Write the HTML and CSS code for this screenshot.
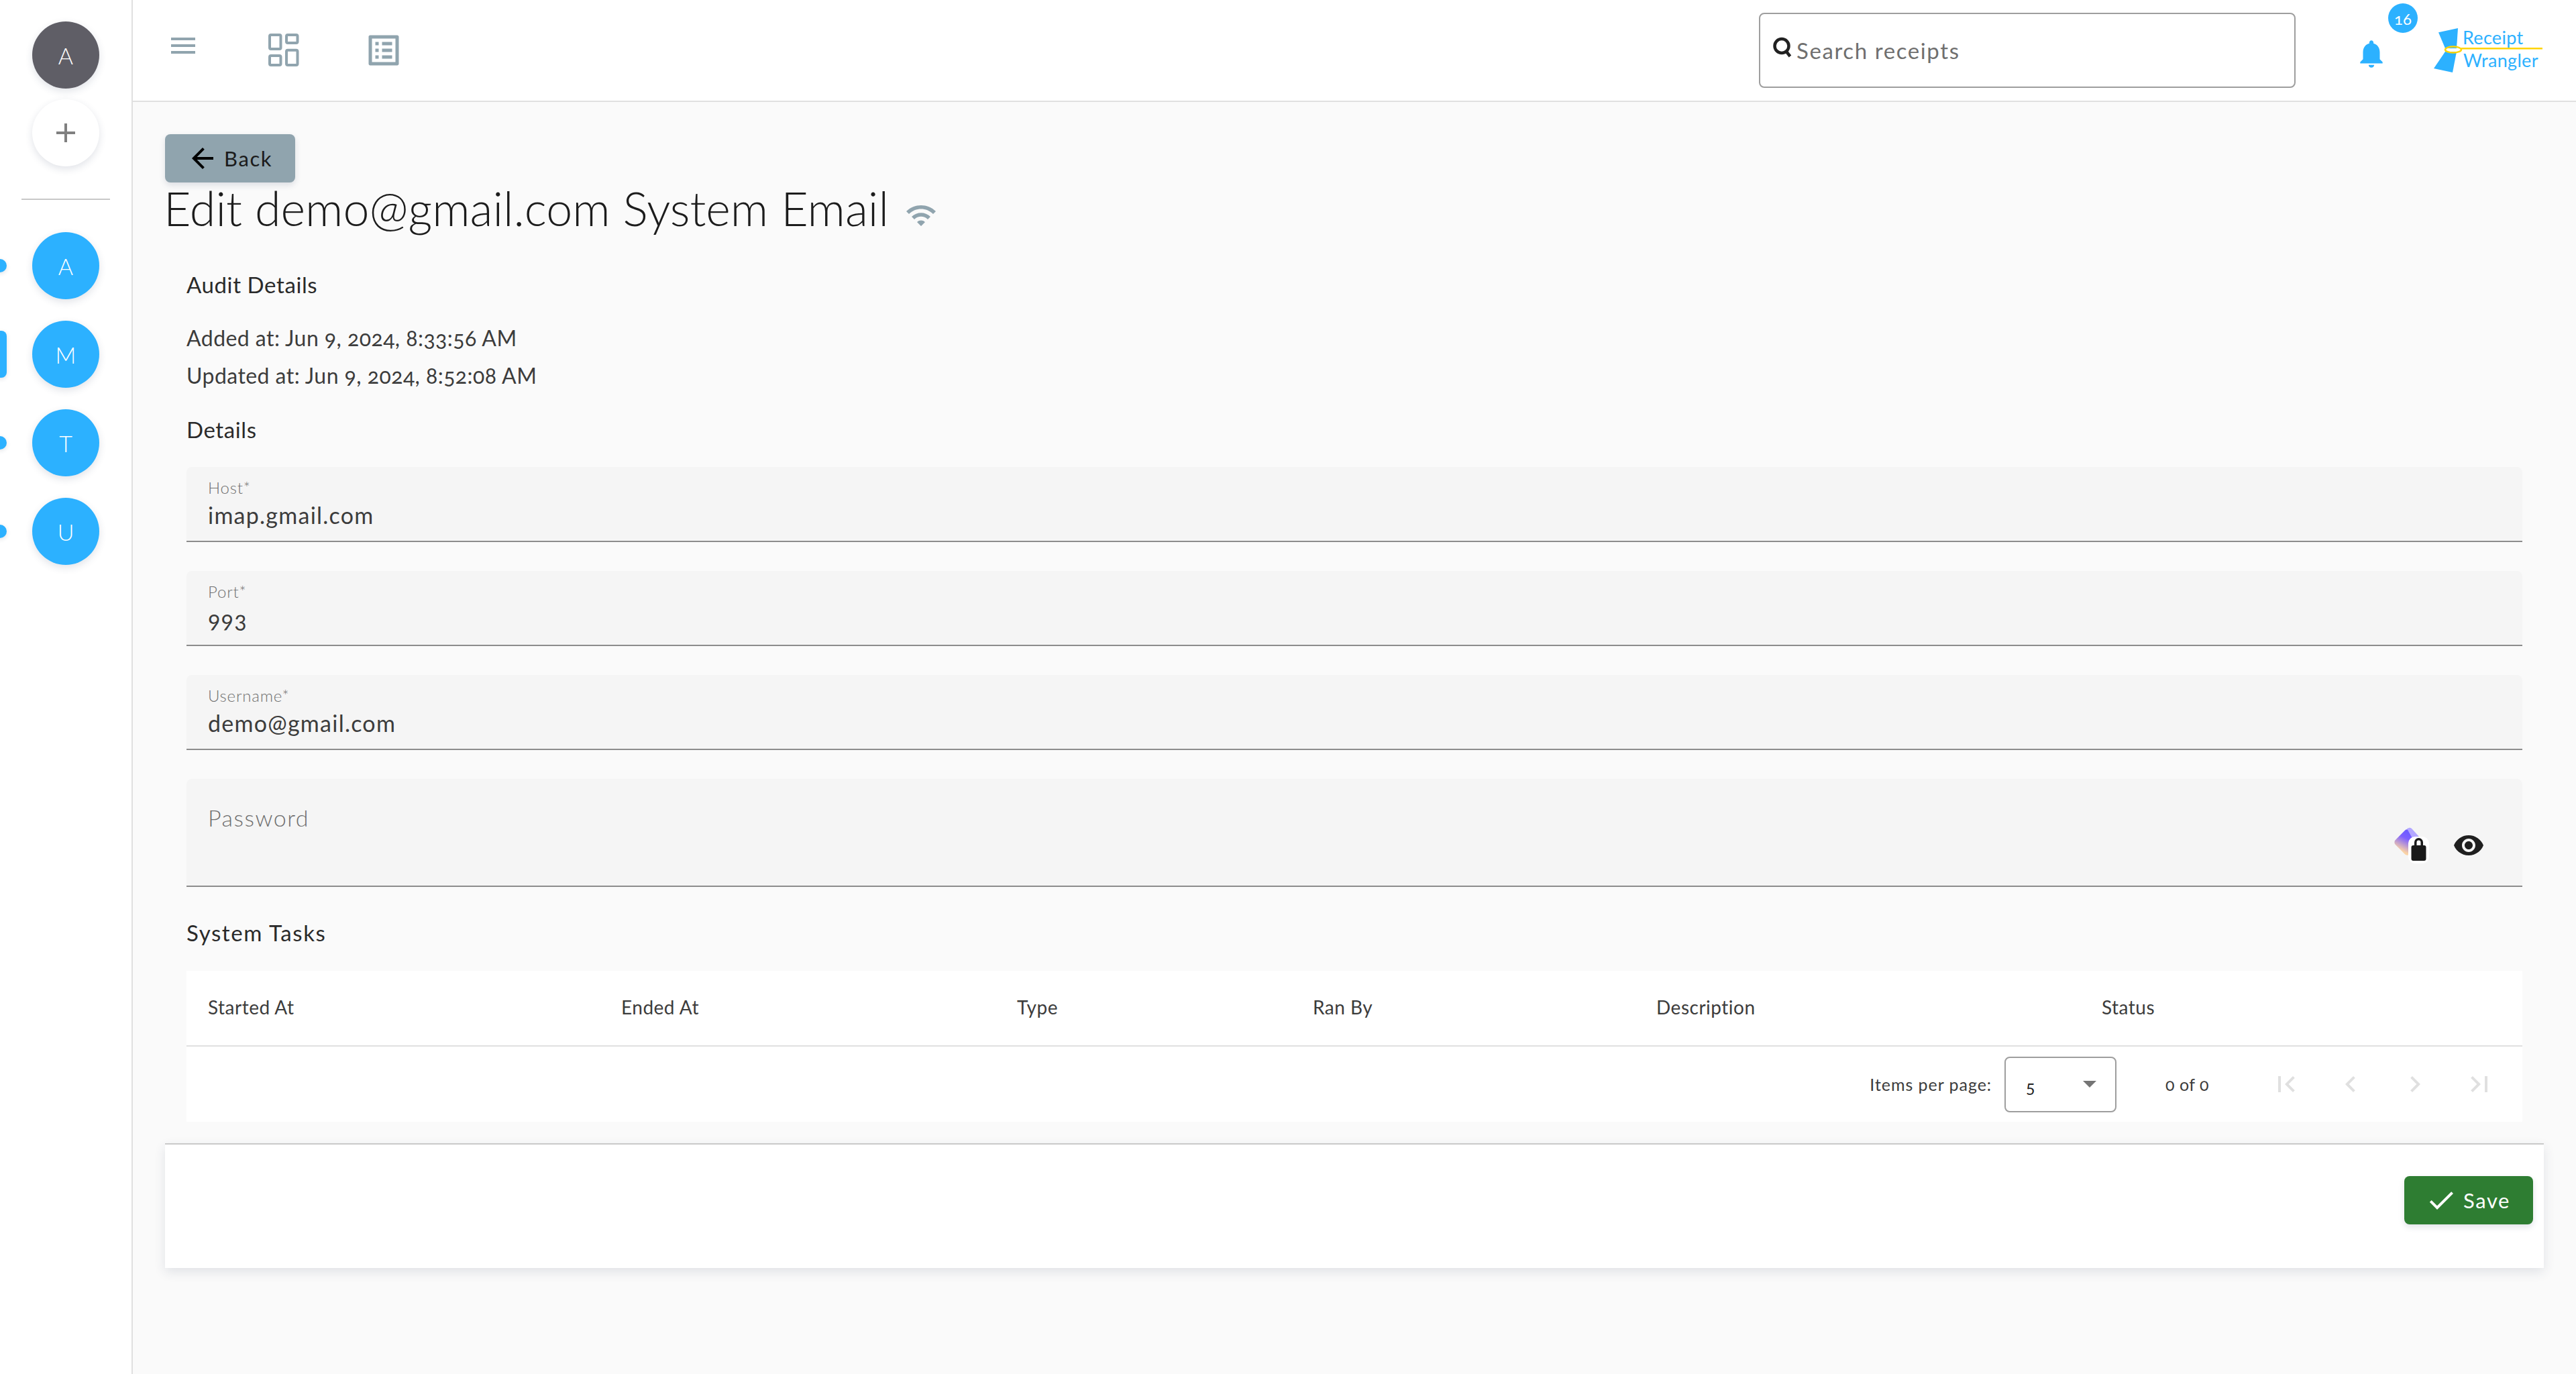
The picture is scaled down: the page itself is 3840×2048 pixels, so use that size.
FILE: index.html
```html
<!DOCTYPE html>
<html lang="en">
<head>
<meta charset="utf-8">
<title>Edit System Email</title>
<link rel="stylesheet" href="styles.css">
</head>
<body>
<div class="app">
  <aside class="rail">
    <div class="avatar avatar-dark">A</div>
    <div class="avatar avatar-white">
      <svg class="plus-icon" viewBox="0 0 24 24"><path d="M19 13h-6v6h-2v-6H5v-2h6V5h2v6h6v2z"/></svg>
    </div>
    <div class="rail-divider"></div>
    <div class="group-list">
      <div class="group-row"><span class="pill"></span><div class="avatar avatar-blue">A</div></div>
      <div class="group-row"><span class="pill pill-active"></span><div class="avatar avatar-blue">M</div></div>
      <div class="group-row"><span class="pill"></span><div class="avatar avatar-blue">T</div></div>
      <div class="group-row"><span class="pill"></span><div class="avatar avatar-blue">U</div></div>
    </div>
  </aside>
  <div class="main">
    <header class="topbar">
      <svg class="icon48 nav-menu" viewBox="0 0 24 24"><path d="M3 18h18v-2H3v2zm0-5h18v-2H3v2zm0-7v2h18V6H3z"/></svg>
      <svg class="icon60 nav-dash" viewBox="0 0 60 60">
        <rect class="tile" x="9" y="7" width="16.500" height="21" rx="2"/>
        <rect class="tile" x="34" y="7" width="16.500" height="12" rx="2"/>
        <rect class="tile" x="9" y="38" width="16.500" height="14" rx="2"/>
        <rect class="tile" x="34" y="29.700" width="16.500" height="22.300" rx="2"/>
      </svg>
      <svg class="icon60 nav-list" viewBox="0 0 24 24"><path d="M19 5v14H5V5h14m1.1-2H3.9c-.5 0-.9.4-.9.9v16.2c0 .4.4.9.9.9h16.2c.4 0 .9-.5.9-.9V3.9c0-.5-.5-.9-.9-.9zM11 7h6v2h-6V7zm0 4h6v2h-6v-2zm0 4h6v2h-6zM7 7h2v2H7zm0 4h2v2H7zm0 4h2v2H7z"/></svg>
      <div class="search">
        <svg class="search-icon" viewBox="0 0 36 36"><circle class="search-ring" cx="16" cy="15.500" r="10.500"/><line class="search-ring" x1="23" y1="24" x2="28.500" y2="31"/></svg>
        <span class="search-text">Search receipts</span>
      </div>
      <div class="bell">
        <svg class="bell-icon" viewBox="0 0 24 24"><path d="M12 22c1.1 0 2-.9 2-2h-4c0 1.1.89 2 2 2zm6-6v-5c0-3.07-1.64-5.64-4.5-6.32V4c0-.83-.67-1.5-1.5-1.5s-1.5.67-1.5 1.5v.68C7.63 5.36 6 7.92 6 11v5l-2 2v1h16v-1l-2-2z"/></svg>
        <span class="badge">16</span>
      </div>
      <svg class="logo" viewBox="0 0 170 72">
        <polygon class="logo-fill" points="25,7.300 54,1 52,31 35,31"/>
        <polygon class="logo-fill" points="35,36 52,36 46,67 18,61"/>
        <ellipse class="logo-ring" cx="47" cy="33" rx="12" ry="4.500"/>
        <line class="logo-line" x1="59" y1="31.300" x2="180" y2="31.300"/>
        <text class="logo-text" x="61" y="25">Receipt</text>
        <text class="logo-text" x="62" y="59">Wrangler</text>
      </svg>
    </header>
    <main class="content">
      <a class="btn btn-back">
        <svg class="icon48" viewBox="0 0 24 24"><path d="M20 11H7.83l5.59-5.59L12 4l-8 8 8 8 1.41-1.41L7.83 13H20v-2z"/></svg>
        <span>Back</span>
      </a>
      <h1 class="title"><span class="title-text">Edit demo@gmail.com System Email</span>
        <svg class="wifi" viewBox="0 0 24 24"><path d="M1 9l2 2c4.97-4.97 13.03-4.97 18 0l2-2C16.93 2.93 7.08 2.93 1 9zm8 8l3 3 3-3c-1.65-1.66-4.34-1.66-6 0zm-4-4l2 2c2.76-2.76 7.24-2.76 10 0l2-2C15.14 9.14 8.87 9.14 5 13z"/></svg>
      </h1>
      <section class="form">
        <h2 class="section-title section-audit">Audit Details</h2>
        <p class="audit-line audit-first">Added at: Jun 9, 2024, 8:33:56 AM</p>
        <p class="audit-line">Updated at: Jun 9, 2024, 8:52:08 AM</p>
        <h2 class="section-title section-details">Details</h2>
        <div class="field">
          <label class="field-label">Host*</label>
          <div class="field-value">imap.gmail.com</div>
        </div>
        <div class="field">
          <label class="field-label">Port*</label>
          <div class="field-value">993</div>
        </div>
        <div class="field">
          <label class="field-label">Username*</label>
          <div class="field-value">demo@gmail.com</div>
        </div>
        <div class="field field-password">
          <span class="password-label">Password</span>
          <div class="password-icons">
            <svg class="key-icon" viewBox="0 0 56 56">
              <defs>
                <linearGradient id="keyGrad" x1="0.3" y1="0.1" x2="0.6" y2="1">
                  <stop offset="0" stop-color="#6f5cff"/>
                  <stop offset="0.3" stop-color="#7d5fff"/>
                  <stop offset="1" stop-color="#fbd3a5"/>
                </linearGradient>
              </defs>
              <rect x="8.5" y="8.5" width="30" height="30" rx="5" transform="rotate(45 23.5 23.5)" fill="url(#keyGrad)"/>
              <path d="M23 3l3-1c2-.5 3 0 5 2l10 11-8 6z" fill="#b3a7ff"/>
              <rect x="25" y="15" width="31" height="40" rx="10" fill="#fff"/>
              <path d="M34 28v-4.500a6.500 6.500 0 0 1 13 0V28h1.500a3 3 0 0 1 3 3v17a3 3 0 0 1-3 3H32.500a3 3 0 0 1-3-3V31a3 3 0 0 1 3-3zM37.500 28h6v-4.500a3 3 0 0 0-6 0z" fill="#1a1a1a" fill-rule="evenodd"/>
            </svg>
            <svg class="icon48 eye-icon" viewBox="0 0 24 24"><path d="M12 4.500C7 4.500 2.730 7.610 1 12c1.730 4.390 6 7.500 11 7.500s9.270-3.110 11-7.500c-1.730-4.390-6-7.500-11-7.500zM12 17c-2.760 0-5-2.240-5-5s2.240-5 5-5 5 2.240 5 5-2.240 5-5 5zm0-8c-1.660 0-3 1.340-3 3s1.340 3 3 3 3-1.340 3-3-1.340-3-3-3z"/></svg>
          </div>
        </div>
        <h2 class="section-title section-tasks">System Tasks</h2>
        <div class="table">
          <div class="table-head">
            <span>Started At</span><span>Ended At</span><span>Type</span><span>Ran By</span><span>Description</span><span>Status</span>
          </div>
          <div class="pager">
            <span class="pager-label">Items per page:</span>
            <div class="select"><span>5</span><i class="select-arrow"></i></div>
            <span class="pager-range">0 of 0</span>
            <button class="pager-btn"><svg class="icon48" viewBox="0 0 24 24"><path d="M18.41 16.59L13.82 12l4.59-4.59L17 6l-6 6 6 6zM6 6h2v12H6z"/></svg></button>
            <button class="pager-btn"><svg class="icon48" viewBox="0 0 24 24"><path d="M15.41 7.41L14 6l-6 6 6 6 1.41-1.41L10.83 12z"/></svg></button>
            <button class="pager-btn"><svg class="icon48" viewBox="0 0 24 24"><path d="M10 6L8.590 7.41 13.17 12l-4.580 4.590L10 18l6-6z"/></svg></button>
            <button class="pager-btn"><svg class="icon48" viewBox="0 0 24 24"><path d="M5.590 7.410L10.180 12l-4.590 4.590L7 18l6-6-6-6zM16 6h2v12h-2z"/></svg></button>
          </div>
        </div>
      </section>
      <footer class="actions">
        <a class="btn btn-save">
          <svg class="icon48" viewBox="0 0 24 24"><path d="M9 16.170L4.830 12l-1.410 1.410L9 19 21 7l-1.410-1.410z"/></svg>
          <span>Save</span>
        </a>
      </footer>
    </main>
  </div>
</div>
</body>
</html>
```
FILE: styles.css
```css
* { box-sizing: border-box; }
html, body { margin: 0; height: 100%; }
body {
  background: #fafafa;
  color: #212121;
  font-family: "Lato", "Open Sans", sans-serif;
  font-variant-numeric: oldstyle-nums;
  font-size: 32px;
}
.app { display: flex; height: 2048px; overflow: hidden; }

/* left rail */
.rail {
  width: 198px;
  flex: none;
  background: #fff;
  border-right: 2px solid #e0e0e0;
  display: flex;
  flex-direction: column;
  align-items: center;
  padding-top: 32px;
}
.avatar {
  width: 100px;
  height: 100px;
  border-radius: 50%;
  display: flex;
  align-items: center;
  justify-content: center;
  font-size: 34px;
  font-weight: 300;
  color: #fff;
  box-shadow: 0 4px 12px rgba(40, 60, 90, .14);
}
.avatar-dark { background: #5f5e66; margin-bottom: 16px; }
.avatar-white { background: #fff; }
.avatar-blue { background: #2cb1ff; }
.plus-icon { width: 48px; height: 48px; fill: #808080; }
.rail-divider { width: 132px; height: 2px; background: #c8c8c8; margin-top: 48px; margin-bottom: 48px; flex: none; }
.group-list { display: flex; flex-direction: column; gap: 32px; width: 100%; align-items: center; }
.group-row { position: relative; width: 100%; display: flex; justify-content: center; }
.pill {
  position: absolute;
  left: -10px;
  top: 40px;
  width: 20px;
  height: 20px;
  border-radius: 10px;
  background: #2cb1ff;
  box-shadow: 0 2px 6px rgba(40, 60, 90, .15);
}
.pill-active { top: 15px; height: 70px; border-radius: 8px; }

/* top bar */
.main { flex: 1; min-width: 0; display: flex; flex-direction: column; }
.topbar {
  height: 152px;
  flex: none;
  background: #fff;
  border-bottom: 2px solid #e0e0e0;
  display: flex;
  align-items: center;
  position: relative;
}
.icon48 { width: 48px; height: 48px; flex: none; }
.icon60 { width: 60px; height: 60px; flex: none; fill: #90a4ae; }
.tile { fill: none; stroke: #90a4ae; stroke-width: 4; }
.nav-menu { fill: #90a4ae; margin-left: 51px; margin-bottom: 14px; }
.nav-dash { margin-left: 96px; }
.nav-list { margin-left: 89px; }
.search {
  margin-left: 2020px;
  width: 800px;
  height: 112px;
  border: 2px solid #9e9e9e;
  border-radius: 8px;
  display: flex;
  align-items: center;
  padding-left: 16px;
}
.search-icon { width: 36px; height: 36px; margin-bottom: 8px; flex: none; }
.search-ring { fill: none; stroke: #212121; stroke-width: 4.500; }
.search-text { color: #6f6f6f; font-size: 33px; letter-spacing: 1.6px; margin-left: 2px; }
.bell { position: relative; margin-left: 88px; width: 50px; height: 50px; margin-top: 10px; }
.bell-icon { width: 50px; height: 50px; fill: #2cb1ff; display: block; }
.badge {
  position: absolute;
  left: 50px;
  top: -50px;
  width: 44px;
  height: 44px;
  border-radius: 50%;
  background: #2cb1ff;
  color: #fff;
  font-size: 24px;
  display: flex;
  align-items: center;
  justify-content: center;
}
.logo { width: 170px; height: 72px; margin-left: 50px; margin-top: 4px; overflow: visible; flex: none; }
.logo-fill { fill: #2cb1ff; }
.logo-ring { fill: none; stroke: #ffd400; stroke-width: 2.500; }
.logo-line { stroke: #ffd400; stroke-width: 2.500; }
.logo-text { fill: #2cb1ff; font-family: "Lato", sans-serif; font-size: 27px; font-weight: 400; letter-spacing: .3px; }

/* content */
.content { flex: 1; padding: 48px 48px 0; display: flex; flex-direction: column; align-items: stretch; }
.btn {
  height: 72px;
  border-radius: 8px;
  display: flex;
  align-items: center;
  font-size: 31px;
  letter-spacing: 1.6px;
  box-shadow: 0 4px 10px rgba(40, 60, 90, .14);
}
.btn-back { width: 194px; background: #90a4ae; color: #1b1b1b; padding-left: 32px; align-self: flex-start; gap: 8px; }
.btn-back .icon48 { fill: #000; }
.title {
  margin: 0 0 0 -2px;
  height: 82px;
  font-size: 70px;
  font-weight: 300;
  display: flex;
  align-items: center;
  white-space: nowrap;
}
.title-text { margin-top: -6px; letter-spacing: 0; color: #1c1c1c; }
.wifi { width: 48px; height: 48px; fill: #90a4ae; margin-left: 24px; margin-top: 16px; }
.form { padding: 0 32px; }
.section-title { margin: 0; font-size: 33px; font-weight: 400; line-height: 40px; color: #2a2a2a; letter-spacing: .6px; }
.section-audit { margin-top: 50px; }
.audit-line { margin: 0; line-height: 56px; height: 56px; font-weight: 400; font-size: 32px; letter-spacing: .45px; color: #3c3c3c; }
.audit-first { margin-top: 32px; }
.section-details { margin-top: 32px; }
.field {
  background: #f5f5f5;
  height: 112px;
  margin-top: 36px;
  border-bottom: 2px solid #8c8c8c;
  border-radius: 8px 8px 0 0;
  padding: 16px 32px 0;
}
.field + .field { margin-top: 43px; }
.field-label { display: block; font-size: 24px; line-height: 30px; color: #707070; font-weight: 300; letter-spacing: .8px; }
.field-value { font-size: 34px; line-height: 44px; margin-top: 4px; letter-spacing: 1.25px; font-weight: 400; color: #3c3c3c; }
.field-password { height: 161px; position: relative; padding-top: 38px; }
.password-label { color: #6f6f6f; font-size: 34px; line-height: 40px; font-weight: 300; letter-spacing: 1.5px; }
.password-icons {
  position: absolute;
  right: 56px;
  top: 71px;
  display: flex;
  align-items: center;
  gap: 35px;
}
.key-icon { width: 56px; height: 56px; }
.eye-icon { fill: #1f1f1f; }
.section-tasks { margin-top: 48px; letter-spacing: 1.6px; }
.table { background: #fff; margin-top: 37px; }
.table-head {
  height: 113px;
  border-bottom: 2px solid #e0e0e0;
  display: grid;
  grid-template-columns: 616px 590px 441px 512px 664px 1fr;
  align-items: center;
  padding-left: 32px;
  padding-bottom: 4px;
  font-size: 28px;
  font-weight: 400;
  letter-spacing: .5px;
  color: #3c3c3c;
}
.pager { height: 112px; display: flex; align-items: center; justify-content: flex-end; padding-right: 16px; }
.pager-label { font-size: 25px; font-weight: 400; margin-right: 19px; letter-spacing: .95px; color: #3c3c3c; }
.select {
  width: 167px;
  height: 83px;
  border: 2px solid #9e9e9e;
  border-radius: 8px;
  padding: 6px 30px 0;
  font-size: 25px;
  display: flex;
  align-items: center;
  justify-content: space-between;
  font-weight: 400;
}
.select-arrow {
  width: 0;
  height: 0;
  border-left: 10px solid transparent;
  border-right: 10px solid transparent;
  border-top: 10px solid #757575;
  margin-right: -2px;
  margin-top: -6px;
}
.pager-range { font-size: 25px; font-weight: 400; margin-left: 73px; width: 132px; letter-spacing: .5px; color: #3c3c3c; }
.pager-btn { width: 96px; height: 96px; border: 0; background: none; padding: 0; display: flex; align-items: center; justify-content: center; }
.pager-btn .icon48 { fill: #e0e0e0; }
.actions {
  margin-top: 32px;
  height: 186px;
  background: #fff;
  border-top: 2px solid #c9c9c9;
  box-shadow: 0 6px 16px rgba(40, 60, 90, .12);
  display: flex;
  justify-content: flex-end;
  align-items: center;
  padding-right: 16px;
  padding-bottom: 18px;
}
.btn-save { width: 192px; background: #2e7d32; color: #fff; padding-left: 31px; gap: 9px; }
.btn-save .icon48 { fill: #fff; }
```
